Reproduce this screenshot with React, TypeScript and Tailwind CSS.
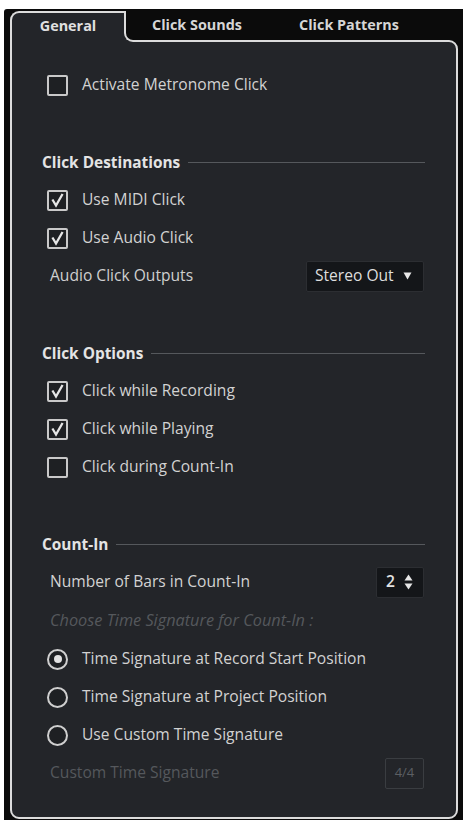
import React from "react";

const font = { fontFamily: '"Open Sans", "Noto Sans", "Liberation Sans", sans-serif' };

function CheckBox({ checked }: { checked: boolean }) {
  return (
    <div className="w-[21px] h-[21px] border-2 border-[#c9c9c9] rounded-[2px] bg-[#1e2023] flex items-center justify-center shrink-0">
      {checked && (
        <svg width="15" height="15" viewBox="0 0 15 15">
          <path d="M3 7.5 L6 12.5 L12 2" fill="none" stroke="#e6e6e6" strokeWidth="2.3" strokeLinecap="square" strokeLinejoin="miter" />
        </svg>
      )}
    </div>
  );
}

function Radio({ checked }: { checked: boolean }) {
  return (
    <div className="w-[21px] h-[21px] rounded-full border-[2.5px] border-[#cfcfcf] bg-[#1e2023] flex items-center justify-center shrink-0">
      {checked && <div className="w-[8px] h-[8px] rounded-full bg-[#e2e2e2]" />}
    </div>
  );
}

function Header({ title }: { title: string }) {
  return (
    <div className="mt-[40px] h-[37px] flex items-center gap-[8px] pl-[30px] pr-[31px]">
      <span className="text-[15.4px] font-bold text-[#e4e4e4]">{title}</span>
      <div className="flex-1 h-px bg-[#55585c]" />
    </div>
  );
}

function CheckRow({ label, checked }: { label: string; checked: boolean }) {
  return (
    <div className="h-[38px] flex items-center pl-[35px]">
      <CheckBox checked={checked} />
      <span className="ml-[14px] text-[15.6px] text-[#d2d2d2]">{label}</span>
    </div>
  );
}

function RadioRow({ label, checked }: { label: string; checked: boolean }) {
  return (
    <div className="h-[38px] flex items-center pl-[35px]">
      <Radio checked={checked} />
      <span className="ml-[14px] text-[15.6px] text-[#d2d2d2]">{label}</span>
    </div>
  );
}

export default function App() {
  return (
    <div className="w-[465px] h-[820px] bg-white overflow-hidden" style={font}>
      <div className="ml-[4px] mt-[9px] w-[459px] h-[811px] bg-[#0b0b0b] rounded-tl-[3px] flex flex-col pl-[6px] pr-[5px] pt-[2px]">
        {/* Tab row */}
        <div className="relative z-10 -mb-[2px] flex h-[31px]">
          <div className="w-[114px] h-full bg-[#232529] border-l-2 border-t-2 border-[#dcdcdc] rounded-tl-[9px] flex items-center justify-center pb-[4px]">
            <span className="text-[14.4px] font-bold text-[#e0e0e0]">General</span>
          </div>
          <div className="flex-1 mr-[9px] bg-[#232529]">
            <div className="w-full h-full bg-[#0b0b0b] border-l-2 border-b-2 border-[#dcdcdc] rounded-bl-[9px] flex items-center pb-[1px]">
              <span className="ml-[26px] text-[14.4px] font-bold text-[#d6d6d6]">Click Sounds</span>
              <span className="ml-[57px] text-[14.4px] font-bold text-[#d6d6d6]">Click Patterns</span>
            </div>
          </div>
        </div>
        {/* Panel */}
        <div className="flex-1 mb-[1px] bg-[#232529] border-2 border-[#dcdcdc] rounded-tr-[9px] rounded-b-[9px] flex flex-col">
          <div className="pt-[24px]">
            <CheckRow label="Activate Metronome Click" checked={false} />
          </div>

          <Header title="Click Destinations" />
          <CheckRow label="Use MIDI Click" checked={true} />
          <CheckRow label="Use Audio Click" checked={true} />
          <div className="h-[38px] flex items-center pl-[38px] pr-[32px]">
            <span className="text-[15.6px] text-[#cfcfcf] flex-1">Audio Click Outputs</span>
            <div className="w-[118px] h-[31px] bg-[#141619] border border-[#2c2e32] rounded-[2px] flex items-center pl-[8px]">
              <span className="text-[15.6px] text-[#dedede]">Stereo Out</span>
              <svg className="ml-[9px]" width="9" height="8" viewBox="0 0 9 8">
                <path d="M0.5 0.5 H8.5 L4.5 7.5 Z" fill="#e8e8e8" />
              </svg>
            </div>
          </div>

          <Header title="Click Options" />
          <CheckRow label="Click while Recording" checked={true} />
          <CheckRow label="Click while Playing" checked={true} />
          <CheckRow label="Click during Count-In" checked={false} />

          <Header title="Count-In" />
          <div className="h-[38px] flex items-center pl-[38px] pr-[32px]">
            <span className="text-[15.6px] text-[#d2d2d2] flex-1">Number of Bars in Count-In</span>
            <div className="w-[48px] h-[31px] bg-[#141619] border border-[#2c2e32] rounded-[2px] flex items-center pl-[9px]">
              <span className="text-[15.6px] text-[#e2e2e2] font-semibold">2</span>
              <svg className="ml-[9px]" width="9" height="16" viewBox="0 0 9 16">
                <path d="M4.5 0.5 L8.5 6.5 H0.5 Z" fill="#e6e6e6" />
                <path d="M0.5 9.5 H8.5 L4.5 15.5 Z" fill="#e6e6e6" />
              </svg>
            </div>
          </div>
          <div className="h-[39px] flex items-center pl-[38px]">
            <span className="text-[16.3px] italic text-[#55585c]">Choose Time Signature for Count-In :</span>
          </div>
          <RadioRow label="Time Signature at Record Start Position" checked={true} />
          <RadioRow label="Time Signature at Project Position" checked={false} />
          <RadioRow label="Use Custom Time Signature" checked={false} />
          <div className="h-[38px] flex items-center pl-[38px] pr-[32px]">
            <span className="text-[15.6px] text-[#55585c] flex-1">Custom Time Signature</span>
            <div className="w-[39px] h-[31px] border border-[#3a3d41] rounded-[2px] flex items-center justify-center">
              <span className="text-[13px] text-[#5c5f63]">4/4</span>
            </div>
          </div>
        </div>
      </div>
    </div>
  );
}
